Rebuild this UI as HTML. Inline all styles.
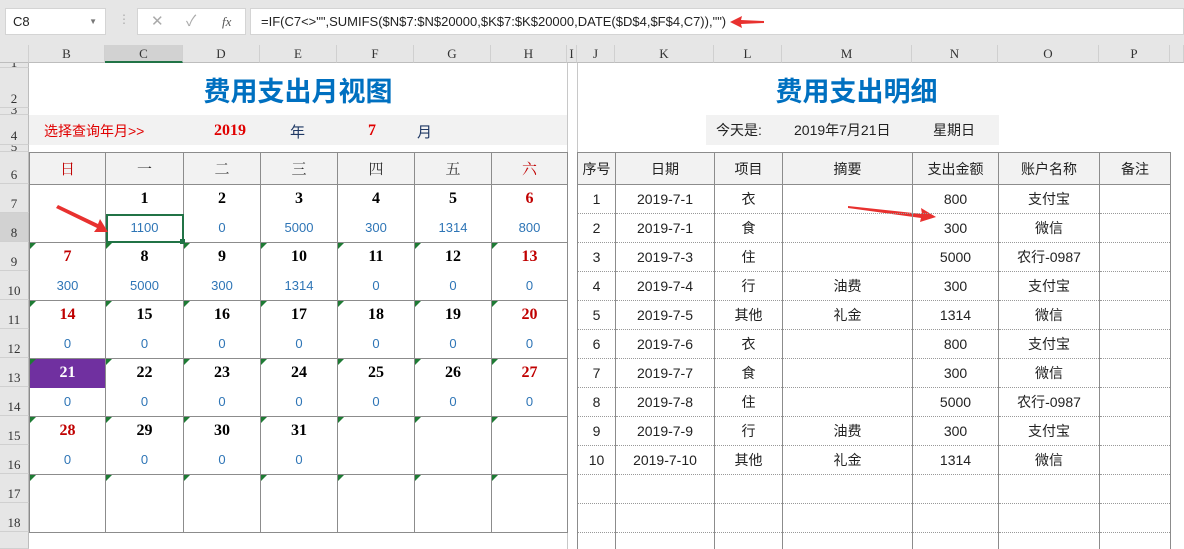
<!DOCTYPE html>
<html style="overflow:hidden;width:1184px;height:549px"><head><meta charset="utf-8">
<style>
*{box-sizing:border-box;margin:0;padding:0}
body{width:1184px;height:549px;overflow:hidden;background:#fff;font-family:"Liberation Sans","Microsoft YaHei","Noto Sans CJK SC",sans-serif;position:relative}
.a{position:absolute}
.top{left:0;top:0;width:1184px;height:45px;background:#e6e6e6}
.box{background:#fff;border:1px solid #d4d4d4}
.colh{top:45px;height:18px;background:#e6e6e6;border-bottom:1px solid #bdbdbd;font-family:"Liberation Serif","Noto Serif CJK SC",serif;font-size:13px;color:#333;text-align:center;line-height:18px;border-right:1px solid #d0d0d0}
.rowh{left:0;width:29px;background:#e6e6e6;border-right:1px solid #bdbdbd;border-bottom:1px solid #d0d0d0;font-size:13px;color:#333;text-align:center;font-family:"Liberation Serif",serif;overflow:hidden}
.rowh span{position:absolute;bottom:0;left:0;width:28px;text-align:center}
table{border-collapse:collapse;table-layout:fixed;position:absolute}
.cal td{border-left:1px solid #8c8c8c;border-right:1px solid #8c8c8c;height:29px;text-align:center;padding:0;position:relative}
.cal tr.u td{border-top:1px solid #8c8c8c}
.cal tr.h td{height:32px;background:#f2f2f2;font-family:"Noto Serif CJK SC",serif;font-size:15px;color:#333;border:1px solid #8c8c8c}
.n{font-family:"Liberation Serif","DejaVu Serif",serif;font-weight:bold;font-size:16px;color:#000}
.r{color:#c00000}
.v{font-size:13px;color:#2e75b6}
.g{position:absolute;left:0;top:0;width:0;height:0;border-top:6px solid #1e7b34;border-right:6px solid transparent}
.det td{border-left:1px solid #8c8c8c;border-right:1px solid #8c8c8c;border-bottom:1px dotted #999;height:29px;text-align:center;font-size:14px;color:#222;padding:0}
.det tr.h td{height:32px;background:#f2f2f2;border:1px solid #8c8c8c}
</style></head><body>
<div class="a top"></div>
<div class="a box" style="left:5px;top:8px;width:101px;height:27px;font-size:13px;line-height:25px;padding-left:7px;color:#222">C8<span style="position:absolute;right:8px;top:0;font-size:8px;color:#777">▼</span></div>
<div class="a" style="left:118px;top:12px;color:#aaa;font-size:12px">⋮</div>
<div class="a box" style="left:137px;top:8px;width:109px;height:27px;color:#aaa;font-size:15px;line-height:25px"><span class="a" style="left:13px">✕</span><span class="a" style="left:48px">✓</span><span class="a" style="left:84px;color:#555;font-style:italic;font-family:'Liberation Serif',serif;font-size:13px">fx</span></div>
<div class="a box" style="left:250px;top:8px;width:934px;height:27px;font-size:13px;line-height:25px;padding-left:10px;color:#222">=IF(C7&lt;&gt;"",SUMIFS($N$7:$N$20000,$K$7:$K$20000,DATE($D$4,$F$4,C7)),"")</div>
<svg class="a" style="left:728px;top:14px" width="38" height="16"><polygon points="2,8 14,2 13,6 36,7 36,9 13,10 14,14" fill="#e8312f"/></svg>
<div class="a colh" style="left:0;width:29px;background:#e6e6e6"></div>
<div class="a colh" style="left:29px;width:76px">B</div>
<div class="a colh" style="left:105px;width:78px;background:#d2d2d2;border-bottom:2px solid #217346">C</div>
<div class="a colh" style="left:183px;width:77px">D</div>
<div class="a colh" style="left:260px;width:77px">E</div>
<div class="a colh" style="left:337px;width:77px">F</div>
<div class="a colh" style="left:414px;width:77px">G</div>
<div class="a colh" style="left:491px;width:76px">H</div>
<div class="a colh" style="left:567px;width:10px">I</div>
<div class="a colh" style="left:577px;width:38px">J</div>
<div class="a colh" style="left:615px;width:99px">K</div>
<div class="a colh" style="left:714px;width:68px">L</div>
<div class="a colh" style="left:782px;width:130px">M</div>
<div class="a colh" style="left:912px;width:86px">N</div>
<div class="a colh" style="left:998px;width:101px">O</div>
<div class="a colh" style="left:1099px;width:71px">P</div>
<div class="a colh" style="left:1170px;width:14px"></div>
<div class="a rowh" style="top:63px;height:5px"><span style="bottom:-4px">1</span></div>
<div class="a rowh" style="top:68px;height:40px"><span>2</span></div>
<div class="a rowh" style="top:108px;height:7px"><span style="bottom:-4px">3</span></div>
<div class="a rowh" style="top:115px;height:30px"><span>4</span></div>
<div class="a rowh" style="top:145px;height:7px"><span style="bottom:-4px">5</span></div>
<div class="a rowh" style="top:152px;height:32px"><span>6</span></div>
<div class="a rowh" style="top:184px;height:29px"><span>7</span></div>
<div class="a rowh" style="top:213px;height:29px;background:#d2d2d2"><span>8</span></div>
<div class="a rowh" style="top:242px;height:29px"><span>9</span></div>
<div class="a rowh" style="top:271px;height:29px"><span>10</span></div>
<div class="a rowh" style="top:300px;height:29px"><span>11</span></div>
<div class="a rowh" style="top:329px;height:29px"><span>12</span></div>
<div class="a rowh" style="top:358px;height:29px"><span>13</span></div>
<div class="a rowh" style="top:387px;height:29px"><span>14</span></div>
<div class="a rowh" style="top:416px;height:29px"><span>15</span></div>
<div class="a rowh" style="top:445px;height:29px"><span>16</span></div>
<div class="a rowh" style="top:474px;height:29px"><span>17</span></div>
<div class="a rowh" style="top:503px;height:29px"><span>18</span></div>
<div class="a rowh" style="top:532px;height:17px"></div>
<div class="a" style="left:29px;top:70px;width:538px;text-align:center;font-size:27px;font-weight:bold;color:#0070c0;font-family:'Noto Sans CJK SC',sans-serif">费用支出月视图</div>
<div class="a" style="left:615px;top:70px;width:483px;text-align:center;font-size:27px;font-weight:bold;color:#0070c0;font-family:'Noto Sans CJK SC',sans-serif">费用支出明细</div>
<div class="a" style="left:29px;top:115px;width:538px;height:30px;background:#f2f2f2"></div>
<div class="a" style="left:44px;top:121px;font-size:14px;color:#e00000">选择查询年月&gt;&gt;</div>
<div class="a n" style="left:214px;top:122px;color:#e00000;font-size:16px">2019</div>
<div class="a" style="left:290px;top:121px;font-size:15px;color:#1f3864">年</div>
<div class="a n" style="left:368px;top:122px;color:#e00000;font-size:16px">7</div>
<div class="a" style="left:417px;top:121px;font-size:15px;color:#1f3864">月</div>
<div class="a" style="left:706px;top:115px;width:293px;height:30px;background:#f2f2f2;font-size:14px;color:#222;line-height:30px"><span class="a" style="left:10px">今天是:</span><span class="a" style="left:88px">2019年7月21日</span><span class="a" style="left:227px">星期日</span></div>
<div class="a" style="left:567px;top:63px;width:1px;height:486px;background:#c8c8c8"></div>
<div class="a" style="left:577px;top:63px;width:1px;height:486px;background:#c8c8c8"></div>
<table class="cal" style="left:29px;top:152px;width:538px">
<colgroup><col style="width:76px"><col style="width:78px"><col style="width:77px"><col style="width:77px"><col style="width:77px"><col style="width:77px"><col style="width:76px"></colgroup>
<tr class="h"><td style="color:#c00000">日</td><td>一</td><td>二</td><td>三</td><td>四</td><td>五</td><td style="color:#c00000">六</td></tr>
<tr class="u"><td></td><td class="n">1</td><td class="n">2</td><td class="n">3</td><td class="n">4</td><td class="n">5</td><td class="n r">6</td></tr>
<tr><td></td><td class="v" style="outline:2px solid #217346;outline-offset:-2px">1100</td><td class="v">0</td><td class="v">5000</td><td class="v">300</td><td class="v">1314</td><td class="v">800</td></tr>
<tr class="u"><td class="n r"><i class="g"></i>7</td><td class="n"><i class="g"></i>8</td><td class="n"><i class="g"></i>9</td><td class="n"><i class="g"></i>10</td><td class="n"><i class="g"></i>11</td><td class="n"><i class="g"></i>12</td><td class="n r"><i class="g"></i>13</td></tr>
<tr><td class="v">300</td><td class="v">5000</td><td class="v">300</td><td class="v">1314</td><td class="v">0</td><td class="v">0</td><td class="v">0</td></tr>
<tr class="u"><td class="n r"><i class="g"></i>14</td><td class="n"><i class="g"></i>15</td><td class="n"><i class="g"></i>16</td><td class="n"><i class="g"></i>17</td><td class="n"><i class="g"></i>18</td><td class="n"><i class="g"></i>19</td><td class="n r"><i class="g"></i>20</td></tr>
<tr><td class="v">0</td><td class="v">0</td><td class="v">0</td><td class="v">0</td><td class="v">0</td><td class="v">0</td><td class="v">0</td></tr>
<tr class="u"><td class="n" style="background:#7030a0;color:#fff"><i class="g"></i>21</td><td class="n"><i class="g"></i>22</td><td class="n"><i class="g"></i>23</td><td class="n"><i class="g"></i>24</td><td class="n"><i class="g"></i>25</td><td class="n"><i class="g"></i>26</td><td class="n r"><i class="g"></i>27</td></tr>
<tr><td class="v">0</td><td class="v">0</td><td class="v">0</td><td class="v">0</td><td class="v">0</td><td class="v">0</td><td class="v">0</td></tr>
<tr class="u"><td class="n r"><i class="g"></i>28</td><td class="n"><i class="g"></i>29</td><td class="n"><i class="g"></i>30</td><td class="n"><i class="g"></i>31</td><td><i class="g"></i></td><td><i class="g"></i></td><td><i class="g"></i></td></tr>
<tr><td class="v">0</td><td class="v">0</td><td class="v">0</td><td class="v">0</td><td></td><td></td><td></td></tr>
<tr class="u"><td><i class="g"></i></td><td><i class="g"></i></td><td><i class="g"></i></td><td><i class="g"></i></td><td><i class="g"></i></td><td><i class="g"></i></td><td><i class="g"></i></td></tr>
<tr style="border-bottom:1px solid #8c8c8c"><td></td><td></td><td></td><td></td><td></td><td></td><td></td></tr>
</table>
<div class="a" style="left:180px;top:239px;width:5px;height:5px;background:#217346"></div>
<svg class="a" style="left:54px;top:204px" width="56" height="30"><polygon points="2,4 4,1 44,20 46,15 54,28 40,28 43,24" fill="#e8312f"/></svg>
<svg class="a" style="left:846px;top:203px" width="92" height="20"><polygon points="2,5 2,3 76,11 75,5 90,14 74,19 75,15" fill="#e8312f"/></svg>
<div class="a" style="left:577px;top:152px;width:600px;height:397px;overflow:hidden">
<table class="det" style="left:0;top:0;width:593px">
<colgroup><col style="width:38px"><col style="width:99px"><col style="width:68px"><col style="width:130px"><col style="width:86px"><col style="width:101px"><col style="width:71px"></colgroup>
<tr class="h"><td>序号</td><td>日期</td><td>项目</td><td>摘要</td><td>支出金额</td><td>账户名称</td><td>备注</td></tr>
<tr><td>1</td><td>2019-7-1</td><td>衣</td><td></td><td>800</td><td>支付宝</td><td></td></tr>
<tr><td>2</td><td>2019-7-1</td><td>食</td><td></td><td>300</td><td>微信</td><td></td></tr>
<tr><td>3</td><td>2019-7-3</td><td>住</td><td></td><td>5000</td><td>农行-0987</td><td></td></tr>
<tr><td>4</td><td>2019-7-4</td><td>行</td><td>油费</td><td>300</td><td>支付宝</td><td></td></tr>
<tr><td>5</td><td>2019-7-5</td><td>其他</td><td>礼金</td><td>1314</td><td>微信</td><td></td></tr>
<tr><td>6</td><td>2019-7-6</td><td>衣</td><td></td><td>800</td><td>支付宝</td><td></td></tr>
<tr><td>7</td><td>2019-7-7</td><td>食</td><td></td><td>300</td><td>微信</td><td></td></tr>
<tr><td>8</td><td>2019-7-8</td><td>住</td><td></td><td>5000</td><td>农行-0987</td><td></td></tr>
<tr><td>9</td><td>2019-7-9</td><td>行</td><td>油费</td><td>300</td><td>支付宝</td><td></td></tr>
<tr><td>10</td><td>2019-7-10</td><td>其他</td><td>礼金</td><td>1314</td><td>微信</td><td></td></tr>
<tr><td></td><td></td><td></td><td></td><td></td><td></td><td></td></tr>
<tr><td></td><td></td><td></td><td></td><td></td><td></td><td></td></tr>
<tr><td></td><td></td><td></td><td></td><td></td><td></td><td></td></tr>
</table>
</div>
</body></html>
